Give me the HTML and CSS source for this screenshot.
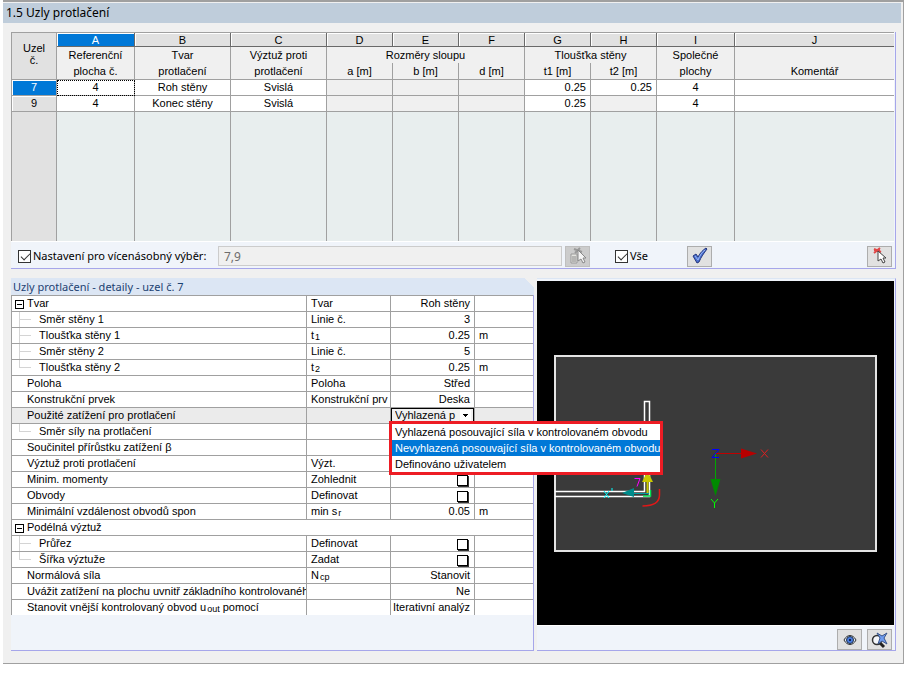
FILE: index.html
```html
<!DOCTYPE html>
<html lang="cs">
<head>
    <meta charset="UTF-8">
    <meta name="viewport" content="width=device-width, initial-scale=1.0">
    <title>1.5 Uzly protlačení</title>
    <link rel="stylesheet" href="styles.css">
</head>
<body>
    <div class="window">
        <h1 class="title-bar">1.5 Uzly protlačení</h1>

        <div class="content">
            <!-- Table of punching nodes -->
            <div class="nodes-panel">
                <table class="nodes">
                    <colgroup>
                        <col class="c-node"><col class="c-ref"><col class="c-mid"><col class="c-mid">
                        <col class="c-dim"><col class="c-dim"><col class="c-dim"><col class="c-dim"><col class="c-dim">
                        <col class="c-surf"><col>
                    </colgroup>
                    <thead>
                        <tr class="letters">
                            <th class="corner" rowspan="3">Uzel<br>č.</th>
                            <th class="active">A</th><th>B</th><th>C</th><th>D</th><th>E</th><th>F</th><th>G</th><th>H</th><th>I</th><th>J</th>
                        </tr>
                        <tr class="names">
                            <th>Referenční</th><th>Tvar</th><th>Výztuž proti</th>
                            <th colspan="3">Rozměry sloupu</th>
                            <th colspan="2">Tloušťka stěny</th>
                            <th>Společné</th><th></th>
                        </tr>
                        <tr class="names units">
                            <th>plocha č.</th><th>protlačení</th><th>protlačení</th>
                            <th>a [m]</th><th>b [m]</th><th>d [m]</th><th>t1 [m]</th><th>t2 [m]</th>
                            <th>plochy</th><th>Komentář</th>
                        </tr>
                    </thead>
                    <tbody>
                        <tr>
                            <th class="active">7</th>
                            <td class="focused">4</td><td>Roh stěny</td><td>Svislá</td>
                            <td class="off"></td><td class="off"></td><td class="off"></td>
                            <td class="num">0.25</td><td class="num">0.25</td><td>4</td><td></td>
                        </tr>
                        <tr>
                            <th>9</th>
                            <td>4</td><td>Konec stěny</td><td>Svislá</td>
                            <td class="off"></td><td class="off"></td><td class="off"></td>
                            <td class="num">0.25</td><td class="off"></td><td>4</td><td></td>
                        </tr>
                        <tr class="empty">
                            <th></th><td></td><td></td><td></td><td></td><td></td><td></td><td></td><td></td><td></td><td></td>
                        </tr>
                    </tbody>
                </table>

                <div class="selection-bar">
                    <label class="check multi"><input type="checkbox" checked>Nastavení pro vícenásobný výběr:</label>
                    <input class="node-list" type="text" value="7,9" aria-label="Seznam uzlů" disabled>
                    <button class="icon-button" type="button" aria-label="Vybrat ze seznamu" disabled>
                        <svg width="20" height="18" viewBox="0 0 20 18">
                            <path d="M3 7h6v9H3z" fill="#e4e4e0" stroke="#999"/>
                            <path d="M4 10h4M4 12h4M4 14h4" stroke="#888"/>
                            <path d="M6 2l8 3M7 6l5-5" stroke="#999" stroke-width="2"/>
                            <path d="M10 3v11l3-2 2 4 2-1-2-4h3z" fill="#f4f4f4" stroke="#888"/>
                        </svg>
                    </button>
                    <label class="check all"><input type="checkbox" checked>Vše</label>
                    <button class="icon-button apply" type="button" aria-label="Použít">
                        <svg width="20" height="18" viewBox="0 0 20 18">
                            <path d="M3 9l3-2 2 3C10 6 13 3 16 1l1 1c-3 4-6 8-8 13l-2 1z" fill="#4a6fd0" stroke="#26367c"/>
                            <path d="M5 9l3 4C10 8 12 5 15 3" fill="none" stroke="#9bb8f4"/>
                        </svg>
                    </button>
                    <button class="icon-button pick" type="button" aria-label="Vybrat v grafice">
                        <svg width="20" height="18" viewBox="0 0 20 18">
                            <path d="M4 2l7 3M4 6l6-5M4 3h6" stroke="#e04848" stroke-width="2"/>
                            <path d="M8 4v10l3-2 2 4 2-1-2-4h3z" fill="#fff" stroke="#444"/>
                        </svg>
                    </button>
                </div>
            </div>

            <div class="lower">
                <!-- Details of the selected node -->
                <div class="details-panel">
                    <h2 class="details-title">Uzly protlačení - detaily - uzel č. 7</h2>
                    <table class="details">
                        <colgroup><col><col class="d-mid"><col class="d-mid"><col class="d-unit"></colgroup>
                        <tbody>
                            <tr><td class="group"><button class="toggle" type="button" aria-label="Sbalit Tvar"></button>Tvar</td><td>Tvar</td><td class="val">Roh stěny</td><td></td></tr>
                            <tr><td class="child">Směr stěny 1</td><td>Linie č.</td><td class="val">3</td><td></td></tr>
                            <tr><td class="child">Tloušťka stěny 1</td><td>t<sub>1</sub></td><td class="val">0.25</td><td>m</td></tr>
                            <tr><td class="child">Směr stěny 2</td><td>Linie č.</td><td class="val">5</td><td></td></tr>
                            <tr><td class="child last">Tloušťka stěny 2</td><td>t<sub>2</sub></td><td class="val">0.25</td><td>m</td></tr>
                            <tr><td>Poloha</td><td>Poloha</td><td class="val">Střed</td><td></td></tr>
                            <tr><td>Konstrukční prvek</td><td>Konstrukční prv</td><td class="val">Deska</td><td></td></tr>
                            <tr class="current">
                                <td><label for="load">Použité zatížení pro protlačení</label></td><td></td>
                                <td class="picker">
                                    <select id="load">
                                        <option>Vyhlazená p</option>
                                    </select>
                                    <ul class="options">
                                        <li>Vyhlazená posouvající síla v kontrolovaném obvodu</li>
                                        <li class="selected">Nevyhlazená posouvající síla v kontrolovaném obvodu</li>
                                        <li>Definováno uživatelem</li>
                                    </ul>
                                </td><td></td>
                            </tr>
                            <tr><td class="child last">Směr síly na protlačení</td><td></td><td></td><td></td></tr>
                            <tr><td>Součinitel přírůstku zatížení β</td><td></td><td></td><td></td></tr>
                            <tr><td>Výztuž proti protlačení</td><td>Výzt.</td><td></td><td></td></tr>
                            <tr><td><label for="moments">Minim. momenty</label></td><td>Zohlednit</td><td class="val"><input id="moments" type="checkbox"></td><td></td></tr>
                            <tr><td><label for="perimeters">Obvody</label></td><td>Definovat</td><td class="val"><input id="perimeters" type="checkbox"></td><td></td></tr>
                            <tr><td>Minimální vzdálenost obvodů spon</td><td>min s<sub>r</sub></td><td class="val">0.05</td><td>m</td></tr>
                            <tr><td class="group" colspan="4"><button class="toggle" type="button" aria-label="Sbalit Podélná výztuž"></button>Podélná výztuž</td></tr>
                            <tr><td class="child"><label for="section">Průřez</label></td><td>Definovat</td><td class="val"><input id="section" type="checkbox"></td><td></td></tr>
                            <tr><td class="child last"><label for="width">Šířka výztuže</label></td><td>Zadat</td><td class="val"><input id="width" type="checkbox"></td><td></td></tr>
                            <tr><td>Normálová síla</td><td>N<sub>cp</sub></td><td class="val">Stanovit</td><td></td></tr>
                            <tr><td>Uvážit zatížení na plochu uvnitř základního kontrolovanéh</td><td></td><td class="val">Ne</td><td></td></tr>
                            <tr><td>Stanovit vnější kontrolovaný obvod u<sub>out</sub> pomocí</td><td></td><td class="val">Iterativní analýz</td><td></td></tr>
                        </tbody>
                    </table>
                </div>

                <!-- Graphic preview -->
                <div class="preview-panel">
                    <svg class="preview" viewBox="0 0 357 344">
                        <rect x="18" y="75" width="321" height="195" fill="#3a3a3a" stroke="#e4e4e4" stroke-width="2"/>
                        <path d="M18 210.500h89.500v-90h5v95H18" fill="none" stroke="#fff" stroke-width="1.500"/>
                        <!-- global axes -->
                        <path d="M179 172.500h28" stroke="#c00000"/>
                        <path d="M204 167.500l16 5-16 5z" fill="#b80000"/>
                        <path d="M178.500 173v28" stroke="#00a800"/>
                        <path d="M173.500 198l5 17 5-17z" fill="#008a00"/>
                        <path d="M175 168.500h7l-7 8h7" fill="none" stroke="#00f"/>
                        <path d="M224 168.500l7 8m0-8l-7 8" stroke="#e02020"/>
                        <path d="M174 218l3.500 4 3.500-4m-3.500 4v5" fill="none" stroke="#0f0"/>
                        <!-- local axes of the node -->
                        <path d="M110.500 212v-14" stroke="#c8c800" stroke-width="2"/>
                        <path d="M105 201l5.500-11 5.500 11z" fill="#c8c800"/>
                        <path d="M112 212.500H96" stroke="#00a0a0"/>
                        <path d="M85 212l12-5v9z" fill="#008c8c"/>
                        <path d="M97.500 197.500h5.500l-3 8" fill="none" stroke="#f0f"/>
                        <path d="M67 210l5 7m0-7l-5 7m8-10v3" stroke="#0ff"/>
                        <path d="M113.500 209v6H106" fill="none" stroke="#00e050" stroke-width="1.500"/>
                        <path d="M122.500 208v6c0 6-4 11-17 11" fill="none" stroke="#e01818" stroke-width="1.500"/>
                    </svg>
                    <div class="preview-tools">
                        <button class="icon-button" type="button" aria-label="Zobrazení">
                            <svg width="20" height="18" viewBox="0 0 20 18">
                                <path d="M4 9c3-6 9-6 12 0-3 6-9 6-12 0z" fill="#dfe6f4" stroke="#333"/>
                                <circle cx="10" cy="9" r="3.500" fill="#4a7be0" stroke="#234"/>
                                <circle cx="10" cy="9" r="1" fill="#012"/>
                            </svg>
                        </button>
                        <button class="icon-button" type="button" aria-label="Zobrazit vše">
                            <svg width="20" height="18" viewBox="0 0 20 18">
                                <circle cx="7" cy="9" r="4.500" fill="#f4f6fa" stroke="#333" stroke-width="1.500"/>
                                <path d="M10 12l4 4" stroke="#222" stroke-width="3"/>
                                <path d="M7 2l5 3 5-3-3 5 3 6-5-3-4 3 2-6z" fill="#6f9cf0" stroke="#3a5488"/>
                            </svg>
                        </button>
                    </div>
                </div>
            </div>
        </div>
    </div>
</body>
</html>
```

FILE: styles.css
```css
* {
    box-sizing: border-box;
}

body {
    margin: 0;
    background-color: #fff;
    color: #000;
    font-family: "Liberation Sans", Arial, sans-serif;
    font-size: 11px;
    line-height: 15px;
}

.window {
    margin: 0 2px 0 3px;
    background-color: #f0f0f0;
    border: 1px solid #a0a0a0;
    border-width: 2px 1px 1px 0;
}

.title-bar {
    margin: 1px 2px 0 0;
    padding: 0 3px;
    height: 20px;
    background-color: #bfcddb;
    font: 12px/20px "Noto Sans", sans-serif;
}

.content {
    padding: 9px 7px 12px 8px;
}

/* Upper panel */
.nodes-panel {
    padding-right: 1px;
    border-right: 1px solid #a6a6ea;
    border-bottom: 1px solid #a6a6ea;
    background-color: #f0f4fa;
}

table {
    width: 100%;
    table-layout: fixed;
    border-collapse: separate;
    border-spacing: 0;
}

th,
td {
    padding: 0;
    font-weight: normal;
    white-space: nowrap;
    overflow: hidden;
}

.c-node { width: 45px; }
.c-ref { width: 78px; }
.c-mid { width: 96px; }
.c-dim { width: 66px; }
.c-surf { width: 78px; }

.nodes {
    border-top: 1px solid #a0a0a0;
    border-left: 1px solid #a0a0a0;
}

.nodes th,
.nodes td {
    height: 16px;
    text-align: center;
    border-right: 1px solid #a0a0a0;
    border-bottom: 1px solid #a0a0a0;
}

.nodes tr > :last-child {
    border-right: none;
}

.nodes td {
    background-color: #fff;
}

.nodes .letters th {
    height: 14px;
    line-height: 12px;
    background-color: #e1e1e1;
    border-right-color: #696969;
    border-bottom-color: #696969;
    box-shadow: inset 1px 1px #fff;
}

.nodes .letters .corner {
    padding-bottom: 4px;
    border-color: #a0a0a0;
    box-shadow: none;
}

.nodes .names th {
    height: 16px;
    border-bottom: none;
    background-color: #f0f0f0;
}

.nodes .units th {
    height: 17px;
    border-bottom: 1px solid #a0a0a0;
}

.nodes tbody th {
    background-color: #e1e1e1;
    box-shadow: inset 1px 1px #fff;
}

.nodes tbody .active,
.nodes .letters .active {
    background-color: #0078d7;
    color: #fff;
}

.nodes .focused {
    outline: 1px dotted #000;
    outline-offset: -1px;
}

.nodes .off {
    background-color: #f0f0f0;
}

.nodes .num {
    padding-right: 4px;
    text-align: right;
}

.nodes .empty th,
.nodes .empty td {
    height: 129px;
    border-bottom: none;
    box-shadow: none;
}

.nodes .empty td {
    background-color: #e8eeee;
}

.selection-bar {
    display: flex;
    align-items: center;
    height: 27px;
    padding: 2px 2px 0 7px;
    border-top: 1px solid #fff;
    font: 11px/16px "Noto Sans", sans-serif;
}

.check {
    display: flex;
    align-items: center;
    gap: 2px;
}

.check input {
    appearance: none;
    width: 13px;
    height: 13px;
    margin: 0;
    border: 1px solid #333;
    background-color: #fff;
}

.check input:checked::before {
    content: "";
    display: block;
    width: 8px;
    height: 4px;
    margin: 2px 0 0 2px;
    border: solid #333;
    border-width: 0 0 1px 1px;
    transform: rotate(-45deg);
}

.multi {
    width: 200px;
}

.node-list {
    flex: 1;
    min-width: 0;
    height: 20px;
    margin-right: 3px;
    padding: 0 5px;
    border: 1px solid #ccc;
    background-color: #f0f0f0;
    color: #6d6d6d;
    font: 12px "Noto Sans", sans-serif;
}

.icon-button {
    display: flex;
    align-items: center;
    justify-content: center;
    width: 25px;
    height: 21px;
    padding: 0;
    border: 1px solid #adadad;
    background-color: #e1e1e1;
}

.icon-button:disabled {
    border-color: #bfbfbf;
    background-color: #ccc;
}

.all {
    width: 72px;
    margin-left: 25px;
}

.pick {
    margin-left: 155px;
}

/* Lower panels */
.lower {
    display: grid;
    grid-template-columns: 523fr 359fr;
    gap: 3px;
    margin-top: 9px;
}

.details-panel {
    border-right: 1px solid #a6a6ea;
    border-bottom: 1px solid #a6a6ea;
    background-color: #f0f4fa;
}

.details-title {
    height: 17px;
    margin: 0 -1px 0 0;
    padding: 0 2px;
    background: linear-gradient(225deg, #f0f0f0 7px, #dce6f4 7px);
    color: #1c4272;
    font: 11px/17px "Noto Sans", sans-serif;
}

.d-mid { width: 84px; }
.d-unit { width: 58px; }

.details {
    border-left: 1px solid #a0a0a0;
}

.details td {
    height: 16px;
    padding-left: 4px;
    border-top: 1px solid #a0a0a0;
    border-right: 1px solid #a0a0a0;
    background-color: #fff;
}

.details td:last-child {
    border-right: none;
}

.details td:first-child {
    padding-left: 15px;
}

.details .val {
    padding: 0 4px 0 0;
    text-align: right;
}

.details sub {
    margin-left: 1px;
    font-size: 9px;
    line-height: 0;
    vertical-align: -1px;
}

.details td.group {
    padding-left: 3px;
}

.toggle {
    width: 9px;
    height: 9px;
    margin: 0 3px 0 0;
    padding: 0;
    border: 1px solid #000;
    background: linear-gradient(#000, #000) center / 5px 1px no-repeat #fff;
    vertical-align: -1px;
}

/* Tree lines in front of nested rows */
.details td.child {
    padding-left: 27px;
    background:
        linear-gradient(#d4d4d4, #d4d4d4) 7px 0 / 1px 100% no-repeat,
        linear-gradient(#d4d4d4, #d4d4d4) 7px 7px / 12px 1px no-repeat,
        #fff;
}

.details td.last {
    background:
        linear-gradient(#d4d4d4, #d4d4d4) 7px 0 / 1px 8px no-repeat,
        linear-gradient(#d4d4d4, #d4d4d4) 7px 7px / 12px 1px no-repeat,
        #fff;
}

.details input {
    appearance: none;
    display: block;
    width: 11px;
    height: 11px;
    margin: 1px 2px 0 auto;
    border: 1px solid #000;
    background-color: #fff;
    box-shadow: 1px 1px #333;
}

.details .current td {
    background-color: #ebebeb;
}

.details td.picker {
    position: relative;
    padding: 0;
    overflow: visible;
}

/* The arrow is three stacked lines on a light square */
.picker select {
    appearance: none;
    display: block;
    width: 100%;
    height: 15px;
    padding: 0 12px 0 3px;
    border: 1px solid #000;
    border-radius: 0;
    background:
        linear-gradient(#000, #000) right 5px top 5px / 5px 1px no-repeat,
        linear-gradient(#000, #000) right 6px top 6px / 3px 1px no-repeat,
        linear-gradient(#000, #000) right 7px top 7px / 1px 1px no-repeat,
        linear-gradient(#fff, #fff) right 2px top 1px / 11px 11px no-repeat,
        #f0f0f0;
    color: #000;
    font: 11px/13px "Liberation Sans", Arial, sans-serif;
}

.options {
    position: absolute;
    z-index: 1;
    top: 13px;
    left: -2px;
    margin: 0;
    padding: 0;
    border: 3px solid #ed1c24;
    background-color: #fff;
    list-style: none;
}

.options li {
    padding: 0 0 0 3px;
    line-height: 16px;
    white-space: nowrap;
}

.options .selected {
    background-color: #0078d7;
    color: #fff;
}

.preview-panel {
    display: flex;
    flex-direction: column;
    padding: 2px 1px 0 0;
    border: 1px solid #a6a6ea;
    border-top-color: #dce6f4;
    border-left: none;
    background-color: #f0f4fa;
}

.preview {
    flex: 1;
    width: 100%;
    background-color: #000;
}

.preview-tools {
    display: flex;
    justify-content: flex-end;
    gap: 5px;
    padding: 3px 2px 0 0;
    border-top: 1px solid #fff;
}
```
